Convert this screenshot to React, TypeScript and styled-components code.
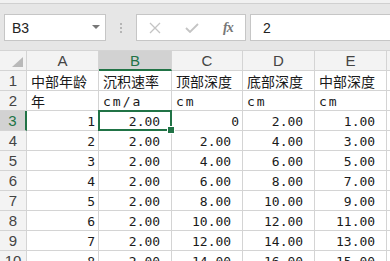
import React from 'react';
import styled, { createGlobalStyle, css } from 'styled-components';

const Global = createGlobalStyle`
  html, body {
    margin: 0;
    padding: 0;
    background: #e6e6e6;
    overflow: hidden;
  }
`;

const Page = styled.div`
  width: 390px;
  height: 261px;
  overflow: hidden;
  background: #e6e6e6;
  font-family: 'Liberation Sans', Arial, sans-serif;
`;

const TopStrip = styled.div`
  height: 3px;
  background: #f1f1f1;
  border-bottom: 1px solid #d0d0d0;
`;

const FormulaBar = styled.div`
  display: flex;
  align-items: center;
  height: 27px;
  margin-top: 10px;
  padding-left: 4px;
`;

const NameBox = styled.div`
  box-sizing: border-box;
  width: 102px;
  height: 27px;
  background: #fff;
  border: 1px solid #c6c6c6;
  display: flex;
  align-items: center;
  justify-content: space-between;
  padding: 0 5px 0 7px;
  font-size: 14px;
  color: #222;
`;

const Arrow = styled.span`
  width: 0;
  height: 0;
  border-left: 4px solid transparent;
  border-right: 4px solid transparent;
  border-top: 4px solid #777;
  margin-top: -2px;
`;

const Dots = styled.div`
  width: 30px;
  display: flex;
  flex-direction: column;
  align-items: center;
  gap: 2px;
  span {
    width: 2px;
    height: 2px;
    background: #b5b5b5;
  }
`;

const FxBox = styled.div`
  box-sizing: border-box;
  width: 110px;
  height: 27px;
  background: #fff;
  border: 1px solid #c6c6c6;
  display: flex;
  align-items: center;
  padding-left: 12px;
  gap: 24px;
`;

const FxText = styled.span`
  font-family: 'Liberation Serif', 'Times New Roman', serif;
  font-style: italic;
  font-weight: bold;
  font-size: 14px;
  color: #777;
  letter-spacing: -1px;
`;

const Input = styled.div`
  box-sizing: border-box;
  flex: 1;
  height: 27px;
  margin-left: 4px;
  background: #fff;
  border: 1px solid #c6c6c6;
  border-right: none;
  display: flex;
  align-items: center;
  padding-left: 12px;
  font-size: 14px;
  color: #222;
`;

const Grid = styled.div`
  margin-top: 9px;
  display: grid;
  grid-template-columns: 27px 72px 73px 71px 72px 72px 40px;
  grid-auto-rows: 20px;
  border-top: 1px solid #d4d4d4;
  background: #fff;
`;

const HeadCell = styled.div<{ $sel?: boolean; $col?: boolean }>`
  box-sizing: border-box;
  display: flex;
  align-items: center;
  justify-content: center;
  background: #f3f3f3;
  border-right: 1px solid #d4d4d4;
  border-bottom: 1px solid #d4d4d4;
  font-size: 15px;
  color: #444;
  ${(p) =>
    p.$sel &&
    css`
      background: #d2d2d2;
      color: #217346;
    `}
  ${(p) =>
    p.$sel &&
    p.$col &&
    css`
      border-bottom: 2px solid #217346;
    `}
  ${(p) =>
    p.$sel &&
    !p.$col &&
    css`
      border-right: 2px solid #217346;
    `}
`;

const Corner = styled(HeadCell)`
  position: relative;
  &::after {
    content: '';
    position: absolute;
    right: 3px;
    bottom: 3px;
    width: 0;
    height: 0;
    border-left: 11px solid transparent;
    border-bottom: 10px solid #b9b9b9;
  }
`;

const Cell = styled.div<{ $num?: boolean; $active?: boolean }>`
  box-sizing: border-box;
  position: relative;
  display: flex;
  align-items: center;
  padding: 1px 3px 0 4px;
  border-right: 1px solid #d4d4d4;
  border-bottom: 1px solid #d4d4d4;
  white-space: pre;
  overflow: visible;
  color: #1a1a1a;
  font-size: 14px;
  font-family: 'Noto Sans CJK SC', 'Noto Sans CJK JP', sans-serif;
  ${(p) =>
    p.$num &&
    css`
      justify-content: flex-end;
      font-family: 'DejaVu Sans Mono', 'Liberation Mono', monospace;
      font-size: 13px;
    `}
  ${(p) =>
    p.$active &&
    css`
      &::after {
        content: '';
        position: absolute;
        left: -1px;
        top: -1px;
        right: -1px;
        bottom: -1px;
        border: 2px solid #217346;
        pointer-events: none;
      }
      &::before {
        content: '';
        position: absolute;
        right: -4px;
        bottom: -4px;
        width: 6px;
        height: 6px;
        background: #217346;
        border: 1px solid #fff;
        z-index: 2;
      }
    `}
`;

const Unit = styled.span`
  font-family: 'DejaVu Sans Mono', 'Liberation Mono', monospace;
  font-size: 13px;
  letter-spacing: 2px;
`;

const cols = ['A', 'B', 'C', 'D', 'E', ''];
const fmt = (n: number) => n.toFixed(2) + ' ';

const rows: { v: string; num?: boolean; unit?: boolean }[][] = [
  ['中部年龄', '沉积速率', '顶部深度', '底部深度', '中部深度', ''].map((v) => ({ v })),
  [{ v: '年' }, { v: 'cm/a', unit: true }, { v: 'cm', unit: true }, { v: 'cm', unit: true }, { v: 'cm', unit: true }, { v: '' }],
];
for (let k = 1; k <= 8; k++) {
  rows.push([
    { v: String(k), num: true },
    { v: fmt(2), num: true },
    { v: k === 1 ? '0' : fmt(2 * (k - 1)), num: true },
    { v: fmt(2 * k), num: true },
    { v: fmt(2 * k - 1), num: true },
    { v: '' },
  ]);
}

function CancelIcon() {
  return (
    <svg width="12" height="12" viewBox="0 0 12 12">
      <path d="M1 1 L11 11 M11 1 L1 11" stroke="#c4c4c4" strokeWidth="1.3" />
    </svg>
  );
}

function CheckIcon() {
  return (
    <svg width="14" height="10" viewBox="0 0 14 10">
      <path d="M1 5 L5 9 L13 1" stroke="#c4c4c4" strokeWidth="1.8" fill="none" />
    </svg>
  );
}

export default function App() {
  return (
    <Page>
      <Global />
      <TopStrip />
      <FormulaBar>
        <NameBox>
          B3
          <Arrow />
        </NameBox>
        <Dots>
          <span />
          <span />
          <span />
        </Dots>
        <FxBox>
          <CancelIcon />
          <CheckIcon />
          <FxText>fx</FxText>
        </FxBox>
        <Input>2</Input>
      </FormulaBar>
      <Grid>
        <Corner />
        {cols.map((c, i) => (
          <HeadCell key={i} $col $sel={c === 'B'}>
            {c}
          </HeadCell>
        ))}
        {rows.map((r, i) => (
          <React.Fragment key={i}>
            <HeadCell $sel={i === 2}>{i + 1}</HeadCell>
            {r.map((c, j) => (
              <Cell key={j} $num={c.num} $active={i === 2 && j === 1}>
                {c.unit ? <Unit>{c.v}</Unit> : c.v}
              </Cell>
            ))}
          </React.Fragment>
        ))}
      </Grid>
    </Page>
  );
}
